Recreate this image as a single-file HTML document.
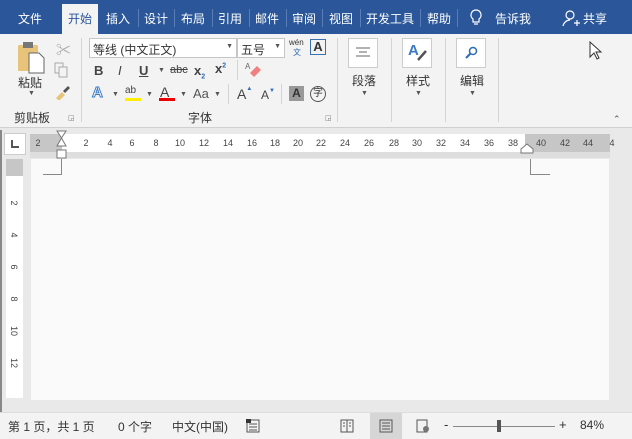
<!DOCTYPE html><html><head><meta charset="utf-8"><style>
*{margin:0;padding:0;box-sizing:border-box}
body{width:632px;height:439px;overflow:hidden;position:relative;background:#e9e9e9;font-family:"Liberation Sans","Noto Sans CJK SC",sans-serif;font-size:12px;color:#333}
.a{position:absolute;white-space:nowrap}
.tab{position:absolute;top:10px;color:#fff;font-size:12px}
.sep{position:absolute;top:9px;width:1px;height:18px;background:#5a7db5}
.vs{position:absolute;top:38px;width:1px;height:84px;background:#d4d4d4}
.rn{position:absolute;top:138px;font-size:9px;color:#444;width:20px;text-align:center}
.vn{position:absolute;left:7px;font-size:9px;color:#444;transform:rotate(90deg);width:14px;text-align:center}
</style></head><body>
<div class="a" style="left:0;top:0;width:632px;height:34px;background:#2b579a"></div>
<div class="a" style="left:62px;top:4px;width:36px;height:31px;background:#f3f3f3"></div>
<div class="tab" style="left:18px">文件</div>
<div class="tab" style="left:68px;color:#2b579a">开始</div>
<div class="tab" style="left:106px">插入</div>
<div class="tab" style="left:144px">设计</div>
<div class="tab" style="left:181px">布局</div>
<div class="tab" style="left:218px">引用</div>
<div class="tab" style="left:255px">邮件</div>
<div class="tab" style="left:292px">审阅</div>
<div class="tab" style="left:329px">视图</div>
<div class="tab" style="left:366px">开发工具</div>
<div class="tab" style="left:427px">帮助</div>
<div class="tab" style="left:495px">告诉我</div>
<div class="tab" style="left:583px">共享</div>
<div class="sep" style="left:138px"></div><div class="sep" style="left:174px"></div><div class="sep" style="left:212px"></div><div class="sep" style="left:249px"></div><div class="sep" style="left:286px"></div><div class="sep" style="left:322px"></div><div class="sep" style="left:360px"></div><div class="sep" style="left:420px"></div><div class="sep" style="left:457px"></div>
<svg class="a" style="left:468px;top:8px" width="16" height="20"><path d="M8 2a5 5 0 0 0-3 9v3h6v-3a5 5 0 0 0-3-9zM6 16h4" stroke="#fff" fill="none" stroke-width="1.2"/></svg>
<svg class="a" style="left:562px;top:9px" width="20" height="20"><circle cx="8" cy="6" r="4" stroke="#fff" fill="none" stroke-width="1.2"/><path d="M1 17c1-4 4-6 7-6M12 14h6M15 11v6" stroke="#fff" fill="none" stroke-width="1.2"/></svg>
<!-- ribbon -->
<div class="a" style="left:0;top:34px;width:632px;height:94px;background:#f3f3f3;border-bottom:1px solid #d0d0d0"></div>
<div class="vs" style="left:81px"></div><div class="vs" style="left:337px"></div><div class="vs" style="left:391px"></div><div class="vs" style="left:445px"></div><div class="vs" style="left:498px"></div>
<svg class="a" style="left:17px;top:41px" width="30" height="34"><rect x="1" y="4" width="20" height="26" fill="#e8c37a" rx="1"/><rect x="6" y="1" width="10" height="6" fill="#777"/><path d="M12 12h10l5 5v15H12z" fill="#fff" stroke="#666"/></svg>
<div class="a" style="left:18px;top:74px;font-size:12px">粘贴</div>
<div class="a" style="left:28px;top:90px;font-size:7px;color:#555">▼</div>
<div class="a" style="left:56px;top:39px;color:#aaa;font-size:15px">✂</div>
<svg class="a" style="left:54px;top:62px" width="16" height="16"><rect x="1" y="1" width="8" height="10" fill="none" stroke="#aaa"/><rect x="5" y="5" width="8" height="10" fill="#f3f3f3" stroke="#aaa"/></svg>
<svg class="a" style="left:54px;top:84px" width="16" height="16"><path d="M2 14l6-6 3 3-6 6z" fill="#e8c37a"/><path d="M9 7l5-5 2 2-5 5z" fill="#555"/></svg>
<div class="a" style="left:14px;top:109px">剪贴板</div>
<div class="a" style="left:68px;top:114px;font-size:7px;color:#777">◲</div>
<div class="a" style="left:89px;top:38px;width:148px;height:20px;background:#fff;border:1px solid #c6c6c6;padding:2px 3px;font-size:12px">等线 (中文正文)<span style="position:absolute;right:3px;top:4px;font-size:7px;color:#555">▼</span></div>
<div class="a" style="left:237px;top:38px;width:48px;height:20px;background:#fff;border:1px solid #c6c6c6;padding:2px 3px;font-size:12px">五号<span style="position:absolute;right:3px;top:4px;font-size:7px;color:#555">▼</span></div>
<div class="a" style="left:289px;top:38px;font-size:8px;color:#333">wén</div>
<div class="a" style="left:293px;top:47px;font-size:8px;color:#2b6cb5">文</div>
<div class="a" style="left:310px;top:39px;width:16px;height:16px;border:1px solid #3a6fb0;font-size:13px;font-weight:bold;text-align:center;line-height:14px;color:#333">A</div>
<div class="a" style="left:94px;top:63px;font-weight:bold;font-size:13px;color:#444">B</div>
<div class="a" style="left:118px;top:63px;font-style:italic;font-size:13px;color:#444">I</div>
<div class="a" style="left:139px;top:63px;text-decoration:underline;font-weight:bold;font-size:13px;color:#444">U</div>
<div class="a" style="left:158px;top:67px;font-size:7px;color:#555">▼</div>
<div class="a" style="left:170px;top:64px;font-size:11px;text-decoration:line-through;color:#444">abc</div>
<div class="a" style="left:194px;top:63px;font-weight:bold;font-size:13px;color:#444">x<sub style="font-size:7px;color:#2b6cb5">2</sub></div>
<div class="a" style="left:215px;top:61px;font-weight:bold;font-size:13px;color:#444">x<sup style="font-size:7px;color:#2b6cb5">2</sup></div>
<div class="a" style="left:237px;top:60px;width:1px;height:20px;background:#d4d4d4"></div>
<svg class="a" style="left:244px;top:62px" width="18" height="16"><path d="M6 11l7-7 4 4-7 7z" fill="#f08080"/><text x="1" y="7" font-size="8" fill="#666" font-family="Liberation Sans">A</text></svg>
<div class="a" style="left:92px;top:84px;font-size:15px;font-weight:bold;color:#fff;-webkit-text-stroke:1px #3a7ac5">A</div>
<div class="a" style="left:112px;top:91px;font-size:7px;color:#555">▼</div>
<div class="a" style="left:125px;top:85px;font-size:10px;color:#444">ab</div>
<div class="a" style="left:125px;top:98px;width:16px;height:3px;background:#ffee00"></div>
<div class="a" style="left:146px;top:91px;font-size:7px;color:#555">▼</div>
<div class="a" style="left:160px;top:84px;font-size:14px;color:#444">A</div>
<div class="a" style="left:159px;top:98px;width:16px;height:3px;background:#e00"></div>
<div class="a" style="left:180px;top:91px;font-size:7px;color:#555">▼</div>
<div class="a" style="left:193px;top:86px;font-size:13px;color:#555">Aa</div>
<div class="a" style="left:214px;top:91px;font-size:7px;color:#555">▼</div>
<div class="a" style="left:228px;top:84px;width:1px;height:20px;background:#d4d4d4"></div>
<div class="a" style="left:237px;top:86px;font-size:14px;color:#444">A<span style="font-size:6px;color:#2b6cb5;vertical-align:top">▲</span></div>
<div class="a" style="left:261px;top:88px;font-size:12px;color:#444">A<span style="font-size:6px;color:#2b6cb5;vertical-align:top">▼</span></div>
<div class="a" style="left:281px;top:84px;width:1px;height:20px;background:#d4d4d4"></div>
<div class="a" style="left:289px;top:86px;width:15px;height:15px;background:#999;font-weight:bold;font-size:12px;text-align:center;line-height:15px;color:#333">A</div>
<div class="a" style="left:310px;top:86px;width:16px;height:16px;border:1px solid #555;border-radius:50%;font-size:10px;text-align:center;line-height:14px">字</div>
<div class="a" style="left:188px;top:109px">字体</div>
<div class="a" style="left:325px;top:114px;font-size:7px;color:#777">◲</div>
<div class="a" style="left:348px;top:38px;width:30px;height:30px;background:#fff;border:1px solid #ccc"></div>
<svg class="a" style="left:355px;top:46px" width="16" height="14"><path d="M1 2h14M4 6h8M1 10h14" stroke="#666"/></svg>
<div class="a" style="left:352px;top:72px">段落</div>
<div class="a" style="left:361px;top:90px;font-size:7px;color:#555">▼</div>
<div class="a" style="left:402px;top:38px;width:30px;height:30px;background:#fff;border:1px solid #ccc"></div>
<div class="a" style="left:408px;top:42px;font-size:15px;font-weight:bold;color:#3a7ac5">A</div>
<svg class="a" style="left:416px;top:48px" width="12" height="14"><path d="M2 12l8-9" stroke="#555" stroke-width="2.5"/></svg>
<div class="a" style="left:406px;top:72px">样式</div>
<div class="a" style="left:415px;top:90px;font-size:7px;color:#555">▼</div>
<div class="a" style="left:456px;top:38px;width:30px;height:30px;background:#fff;border:1px solid #ccc"></div>
<svg class="a" style="left:463px;top:45px" width="16" height="16"><circle cx="10" cy="6" r="3.5" stroke="#2b6cb5" fill="none" stroke-width="1.5"/><path d="M7.5 8.5L3 13" stroke="#2b6cb5" stroke-width="2"/></svg>
<div class="a" style="left:460px;top:72px">编辑</div>
<div class="a" style="left:469px;top:90px;font-size:7px;color:#555">▼</div>
<div class="a" style="left:613px;top:114px;font-size:9px;color:#555">⌃</div>
<svg class="a" style="left:589px;top:41px" width="14" height="20"><path d="M1 1v15l4-4 3 6 2-1-3-6h5z" fill="#fff" stroke="#333"/></svg>
<!-- ruler -->
<div class="a" style="left:4px;top:133px;width:22px;height:22px;background:#fff;border:1px solid #ccc"></div>
<div class="a" style="left:11px;top:140px;width:8px;height:8px;border-left:2px solid #555;border-bottom:2px solid #555"></div>
<div class="a" style="left:30px;top:134px;width:580px;height:18px;background:#fff"></div>
<div class="a" style="left:30px;top:134px;width:32px;height:18px;background:#c6c6c6"></div>
<div class="a" style="left:525px;top:134px;width:85px;height:18px;background:#c6c6c6"></div>
<div class="a" style="left:30px;top:152px;width:580px;height:6px;background:#dedede"></div>
<div class="rn" style="left:28px">2</div>
<div class="rn" style="left:76px">2</div><div class="rn" style="left:100px">4</div><div class="rn" style="left:122px">6</div><div class="rn" style="left:146px">8</div><div class="rn" style="left:170px">10</div><div class="rn" style="left:194px">12</div><div class="rn" style="left:218px">14</div><div class="rn" style="left:242px">16</div><div class="rn" style="left:265px">18</div><div class="rn" style="left:288px">20</div><div class="rn" style="left:311px">22</div><div class="rn" style="left:335px">24</div><div class="rn" style="left:359px">26</div><div class="rn" style="left:384px">28</div><div class="rn" style="left:407px">30</div><div class="rn" style="left:431px">32</div><div class="rn" style="left:455px">34</div><div class="rn" style="left:479px">36</div><div class="rn" style="left:503px">38</div><div class="rn" style="left:531px">40</div><div class="rn" style="left:555px">42</div><div class="rn" style="left:578px">44</div><div class="rn" style="left:602px">4</div>
<svg class="a" style="left:55px;top:130px" width="14" height="30"><path d="M2 1h9L6.5 8zM2 16h9L6.5 8z" fill="#fff" stroke="#777"/><rect x="2" y="20" width="9" height="8" fill="#fff" stroke="#777"/></svg>
<svg class="a" style="left:520px;top:142px" width="14" height="12"><path d="M1 11V7l6-5 6 5v4z" fill="#fff" stroke="#777"/></svg>
<!-- page -->
<div class="a" style="left:31px;top:159px;width:578px;height:241px;background:#fafafa"></div>
<div class="a" style="left:43px;top:159px;width:19px;height:16px;border-right:1px solid #888;border-bottom:1px solid #888"></div>
<div class="a" style="left:530px;top:159px;width:20px;height:16px;border-left:1px solid #888;border-bottom:1px solid #888"></div>
<div class="a" style="left:0;top:130px;width:2px;height:282px;background:#888"></div>
<div class="a" style="left:6px;top:159px;width:17px;height:239px;background:#fff"></div>
<div class="a" style="left:6px;top:159px;width:17px;height:17px;background:#c6c6c6"></div>
<div class="vn" style="top:198px">2</div><div class="vn" style="top:230px">4</div><div class="vn" style="top:262px">6</div><div class="vn" style="top:294px">8</div><div class="vn" style="top:326px">10</div><div class="vn" style="top:358px">12</div>
<!-- status -->
<div class="a" style="left:0;top:412px;width:632px;height:27px;background:#f3f3f3;border-top:1px solid #ddd"></div>
<div class="a" style="left:370px;top:413px;width:32px;height:26px;background:#d6d6d6"></div>
<div class="a" style="left:8px;top:418px">第 1 页，共 1 页</div>
<div class="a" style="left:118px;top:418px">0 个字</div>
<div class="a" style="left:172px;top:418px">中文(中国)</div>
<svg class="a" style="left:246px;top:419px" width="14" height="14"><rect x="1" y="1" width="12" height="12" fill="none" stroke="#555"/><path d="M3 5h8M3 8h8M3 11h8" stroke="#555"/><rect x="0" y="0" width="5" height="4" fill="#333"/></svg>
<svg class="a" style="left:340px;top:419px" width="14" height="14"><rect x="1" y="1" width="12" height="12" fill="none" stroke="#555"/><path d="M7 1v12M3 4h2M3 7h2M9 4h2M9 7h2" stroke="#555"/></svg>
<svg class="a" style="left:379px;top:419px" width="14" height="14"><rect x="1" y="1" width="12" height="12" fill="none" stroke="#555"/><path d="M3 4h8M3 7h8M3 10h8" stroke="#555"/></svg>
<svg class="a" style="left:416px;top:419px" width="14" height="14"><rect x="1" y="1" width="10" height="12" fill="none" stroke="#555"/><circle cx="10" cy="10" r="3" fill="#777"/></svg>
<div class="a" style="left:444px;top:417px;font-size:13px">-</div>
<div class="a" style="left:453px;top:426px;width:102px;height:1px;background:#888"></div>
<div class="a" style="left:497px;top:420px;width:4px;height:12px;background:#555"></div>
<div class="a" style="left:559px;top:417px;font-size:13px">+</div>
<div class="a" style="left:580px;top:418px">84%</div>
</body></html>
